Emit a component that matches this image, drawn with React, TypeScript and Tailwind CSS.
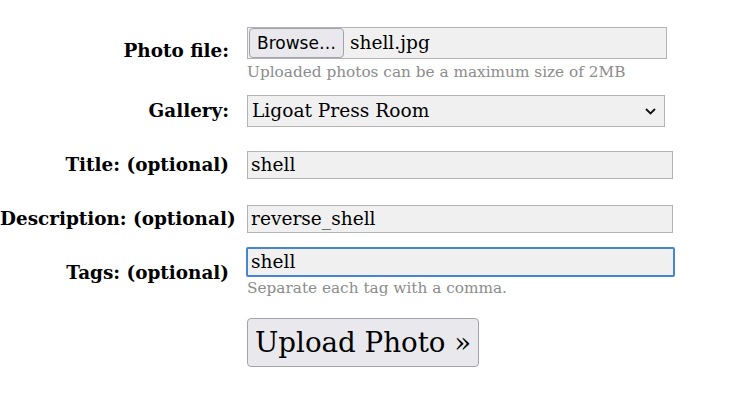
const serif = "font-['DejaVu_Serif','Liberation_Serif',serif]";

function Label({ children, className = '' }: { children: React.ReactNode; className?: string }) {
  return (
    <div className={`w-[229px] shrink-0 text-right font-bold text-[18.4px] text-black whitespace-nowrap ${className}`}>
      {children}
    </div>
  );
}

function TextBox({ value, focused = false }: { value: string; focused?: boolean }) {
  return (
    <div
      className={
        focused
          ? 'w-[429px] h-[30px] -ml-px bg-[#f0f0f0] border-2 border-[#4585d2] rounded-[2px] pl-[3px] text-[18.6px] leading-[25px] text-black'
          : 'w-[426px] h-[28px] bg-[#f0f0f0] border border-[#b3b3b3] pl-[3px] text-[18.6px] leading-[26px] text-black'
      }
    >
      {value}
    </div>
  );
}

export default function App() {
  return (
    <div className={`w-[743px] h-[394px] bg-white overflow-hidden ${serif}`}>
      <div className="pt-[27px] flex flex-col">
        {/* photo file */}
        <div className="flex">
          <Label className="pt-[10px]">Photo file:</Label>
          <div className="ml-[18px]">
            <div className="w-[420px] h-[32px] bg-[#f0f0f0] border border-[#b3b3b3] flex items-center pl-px">
              <div className="h-[30px] px-[7px] rounded-[4px] border border-[#a3a3ab] bg-[#e9e9ed] font-['DejaVu_Sans',sans-serif] text-[17px] leading-[28px] text-black">
                Browse…
              </div>
              <span className="ml-[6px] text-[18.6px] text-black">shell.jpg</span>
            </div>
            <div className="mt-[4px] text-[15.3px] text-[#8c8c8c] leading-[18px]">
              Uploaded photos can be a maximum size of 2MB
            </div>
          </div>
        </div>

        {/* gallery */}
        <div className="flex items-center mt-[14px]">
          <Label>Gallery:</Label>
          <div className="ml-[18px] w-[418px] h-[32px] bg-[#f0f0f0] border border-[#b3b3b3] flex items-center justify-between pl-[4px] pr-[8px] text-[18.6px] text-black">
            <span>Ligoat Press Room</span>
            <svg width="11" height="7" viewBox="0 0 11 7" fill="none">
              <polyline points="1,1 5.5,5.5 10,1" stroke="#111" strokeWidth="1.8" />
            </svg>
          </div>
        </div>

        {/* title */}
        <div className="flex items-center mt-[24px]">
          <Label>Title: (optional)</Label>
          <div className="ml-[18px]">
            <TextBox value="shell" />
          </div>
        </div>

        {/* description */}
        <div className="flex items-center mt-[26px]">
          <Label>Description: (optional)</Label>
          <div className="ml-[18px]">
            <TextBox value="reverse_shell" />
          </div>
        </div>

        {/* tags */}
        <div className="flex mt-[14px]">
          <Label className="pt-[12px]">Tags: (optional)</Label>
          <div className="ml-[18px]">
            <TextBox value="shell" focused />
            <div className="mt-[2px] text-[15.3px] text-[#8c8c8c] leading-[18px]">
              Separate each tag with a comma.
            </div>
          </div>
        </div>

        {/* submit */}
        <div className="flex mt-[21px]">
          <div className="w-[229px] shrink-0" />
          <button className="ml-[18px] h-[49px] w-[232px] px-[7px] rounded-[4px] border border-[#a3a3ab] bg-[#e9e9ed] text-[27.7px] text-black leading-none whitespace-nowrap">
            Upload Photo »
          </button>
        </div>
      </div>
    </div>
  );
}
